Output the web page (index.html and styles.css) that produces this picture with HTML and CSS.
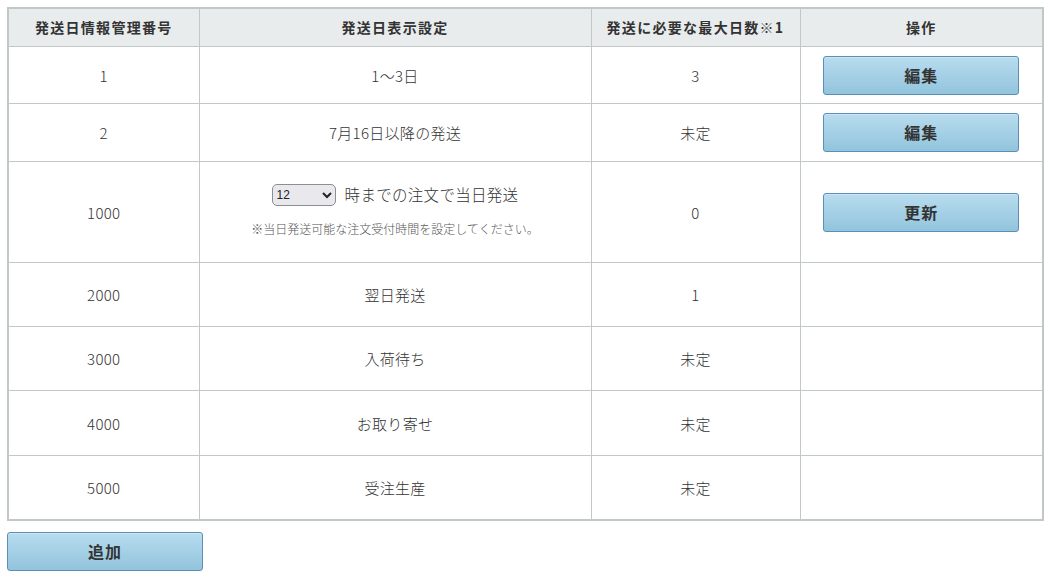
FILE: index.html
```html
<!DOCTYPE html>
<html lang="ja">
<head>
<meta charset="utf-8">
<link rel="stylesheet" href="styles.css">
</head>
<body>
<div class="page">
  <table class="ship-table">
    <colgroup>
      <col class="c1"><col class="c2"><col class="c3"><col class="c4">
    </colgroup>
    <thead>
      <tr>
        <th>発送日情報管理番号</th>
        <th>発送日表示設定</th>
        <th>発送に必要な最大日数※1</th>
        <th>操作</th>
      </tr>
    </thead>
    <tbody>
      <tr class="r-btn r-first">
        <td>1</td>
        <td>1〜3日</td>
        <td>3</td>
        <td><button class="btn">編集</button></td>
      </tr>
      <tr class="r-btn">
        <td>2</td>
        <td>7月16日以降の発送</td>
        <td>未定</td>
        <td><button class="btn">編集</button></td>
      </tr>
      <tr class="r-tall">
        <td>1000</td>
        <td class="setting-cell">
          <div class="same-day">
            <select class="hour"><option>12</option></select>
            <span class="same-day-text">時までの注文で当日発送</span>
          </div>
          <div class="note">※当日発送可能な注文受付時間を設定してください。</div>
        </td>
        <td>0</td>
        <td><button class="btn">更新</button></td>
      </tr>
      <tr class="r-plain"><td>2000</td><td>翌日発送</td><td>1</td><td></td></tr>
      <tr class="r-plain"><td>3000</td><td>入荷待ち</td><td>未定</td><td></td></tr>
      <tr class="r-plain r-wide"><td>4000</td><td>お取り寄せ</td><td>未定</td><td></td></tr>
      <tr class="r-plain"><td>5000</td><td>受注生産</td><td>未定</td><td></td></tr>
    </tbody>
  </table>
  <div class="actions">
    <button class="btn btn-add">追加</button>
  </div>
</div>
</body>
</html>
```
FILE: styles.css
```css
html, body {
  margin: 0;
  padding: 0;
  background: #fff;
}
body {
  font-family: "Noto Sans CJK JP", "Noto Sans", sans-serif;
  color: #333;
  font-size: 14px;
}
.page {
  padding: 7px;
}
.ship-table {
  width: 1035px;
  border-collapse: collapse;
  border: 2px solid #c2c8c7;
  table-layout: fixed;
}
.c1 { width: 191px; }
.c2 { width: 392px; }
.c3 { width: 209px; }
.c4 { width: 243px; }
.ship-table th,
.ship-table td {
  border: 1px solid #c2c8c7;
  text-align: center;
  vertical-align: middle;
  padding: 0;
}
.ship-table th {
  background: #e9eced;
  font-weight: bold;
  font-size: 14px;
  letter-spacing: 1.3px;
  height: 35px;
  padding-bottom: 2px;
  color: #333;
}
.ship-table td {
  font-size: 15px;
  font-weight: 300;
  letter-spacing: 0.3px;
}
.r-btn td { height: 57px; }
.r-first td { height: 56px; }
.r-tall td { height: 100px; }
.r-tall td.setting-cell { height: 94px; padding-bottom: 6px; }
.r-plain td { height: 63px; }
.r-wide td { height: 64px; }
.btn {
  display: inline-block;
  width: 196px;
  height: 39px;
  border: 1px solid #5b8fb8;
  border-radius: 3px;
  background: linear-gradient(#b8dcef, #92c4dc);
  font-family: "Noto Sans CJK JP", sans-serif;
  font-size: 16px;
  font-weight: bold;
  letter-spacing: 1px;
  color: #333;
  padding: 0 0 1px;
  box-shadow: inset 0 1px 0 rgba(255,255,255,0.3);
}
.same-day {
  display: flex;
  justify-content: center;
  align-items: center;
  gap: 9px;
}
.hour {
  width: 64px;
  height: 22px;
  font-size: 12px;
  font-family: "Liberation Sans", sans-serif;
  border: 1px solid #8d8d94;
  border-radius: 5px;
  background: #e9e9ed;
  color: #222;
  margin-top: 2px;
}
.same-day-text {
  font-size: 15.5px;
}
.note {
  margin-top: 14px;
  font-size: 12px;
  letter-spacing: 0;
  color: #555;
}
.actions {
  margin-top: 11px;
}
.btn-add {
  width: 196px;
}
```
